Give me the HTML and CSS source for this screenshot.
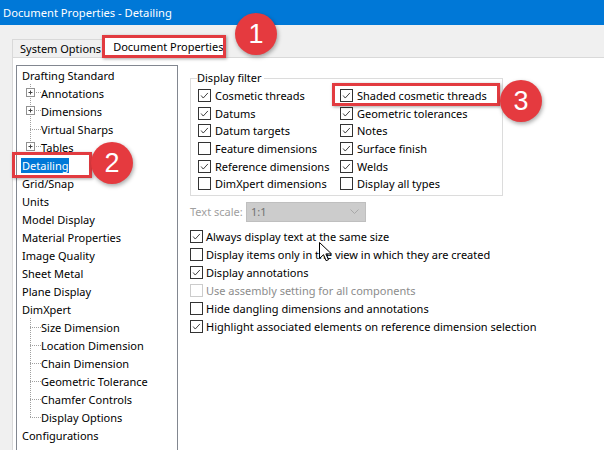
FILE: index.html
```html
<!DOCTYPE html>
<html lang="en">
<head>
    <meta charset="UTF-8">
    <title>Document Properties - Detailing</title>
    <link rel="stylesheet" href="styles.css">
</head>
<body>
    <svg width="0" height="0" class="defs">
        <symbol id="chk" viewBox="0 0 13 13">
            <path d="M2.5 6.5l2.5 3 5.5-6" fill="none" stroke="#333" stroke-width="1.1"/>
        </symbol>
        <symbol id="plus" viewBox="0 0 15 18">
            <rect x="0.5" y="4.5" width="8" height="8" fill="#fff" stroke="#919191"/>
            <path d="M2.5 8.5h4M4.5 6.5v4" stroke="#444"/>
            <path d="M10 8.5h1M12 8.5h1M14 8.5h1" stroke="#a0a0a0"/>
        </symbol>
    </svg>

    <div class="titlebar">Document Properties - Detailing</div>

    <div class="tabs">
        <span class="tab">System Options</span>
        <span class="tab active">Document Properties</span>
    </div>

    <div class="panel">
        <ul class="tree">
            <li class="item">Drafting Standard</li>
            <li class="item child"><svg class="twig"><use href="#plus"/></svg>Annotations</li>
            <li class="item child"><svg class="twig"><use href="#plus"/></svg>Dimensions</li>
            <li class="item child"><span class="twig leaf"></span>Virtual Sharps</li>
            <li class="item child last"><svg class="twig"><use href="#plus"/></svg>Tables</li>
            <li class="item"><span class="sel">Detailing</span></li>
            <li class="item">Grid/Snap</li>
            <li class="item">Units</li>
            <li class="item">Model Display</li>
            <li class="item">Material Properties</li>
            <li class="item">Image Quality</li>
            <li class="item">Sheet Metal</li>
            <li class="item">Plane Display</li>
            <li class="item">DimXpert</li>
            <li class="item child"><span class="twig leaf"></span>Size Dimension</li>
            <li class="item child"><span class="twig leaf"></span>Location Dimension</li>
            <li class="item child"><span class="twig leaf"></span>Chain Dimension</li>
            <li class="item child"><span class="twig leaf"></span>Geometric Tolerance</li>
            <li class="item child"><span class="twig leaf"></span>Chamfer Controls</li>
            <li class="item child last"><span class="twig leaf"></span>Display Options</li>
            <li class="item">Configurations</li>
        </ul>

        <div class="settings">
            <fieldset class="group">
                <legend>Display filter</legend>
                <div class="filter">
                    <div class="check"><svg class="box"><use href="#chk"/></svg>Cosmetic threads</div>
                    <div class="check"><svg class="box"><use href="#chk"/></svg>Shaded cosmetic threads</div>
                    <div class="check"><svg class="box"><use href="#chk"/></svg>Datums</div>
                    <div class="check"><svg class="box"><use href="#chk"/></svg>Geometric tolerances</div>
                    <div class="check"><svg class="box"><use href="#chk"/></svg>Datum targets</div>
                    <div class="check"><svg class="box"><use href="#chk"/></svg>Notes</div>
                    <div class="check"><svg class="box"></svg>Feature dimensions</div>
                    <div class="check"><svg class="box"><use href="#chk"/></svg>Surface finish</div>
                    <div class="check"><svg class="box"><use href="#chk"/></svg>Reference dimensions</div>
                    <div class="check"><svg class="box"><use href="#chk"/></svg>Welds</div>
                    <div class="check"><svg class="box"></svg>DimXpert dimensions</div>
                    <div class="check"><svg class="box"></svg>Display all types</div>
                </div>
            </fieldset>

            <div class="scale">
                <span class="scale-label">Text scale:</span>
                <div class="combo">
                    <span>1:1</span>
                    <svg class="chevron" viewBox="0 0 9 5"><path d="M0.5 0.5l4 4 4-4" fill="none" stroke="#a8a8a8"/></svg>
                </div>
            </div>

            <div class="options">
                <div class="check"><svg class="box"><use href="#chk"/></svg>Always display text at the same size</div>
                <div class="check"><svg class="box"></svg>Display items only in the view in which they are created</div>
                <div class="check"><svg class="box"><use href="#chk"/></svg>Display annotations</div>
                <div class="check off"><svg class="box"></svg>Use assembly setting for all components</div>
                <div class="check"><svg class="box"></svg>Hide dangling dimensions and annotations</div>
                <div class="check"><svg class="box"><use href="#chk"/></svg>Highlight associated elements on reference dimension selection</div>
            </div>
        </div>
    </div>

    <!-- callouts drawn over the dialog -->
    <div class="mark mark-1"></div>
    <div class="mark mark-2"></div>
    <div class="mark mark-3"></div>
    <div class="badge badge-1">1</div>
    <div class="badge badge-2">2</div>
    <div class="badge badge-3">3</div>

    <svg class="cursor" viewBox="0 0 13 20">
        <path d="M0.5 0.5v16l4-3.8 2.6 6 2.4-1-2.6-5.8h5.6z" fill="#fff" stroke="#000"/>
    </svg>
</body>
</html>
```

FILE: styles.css
```css
body {
    margin: 0;
    width: 604px;
    height: 450px;
    overflow: hidden;
    position: relative;
    background-color: #f0f0f0;
    color: #000;
    font-family: "Noto Sans", "Open Sans", sans-serif;
    font-size: 11px;
}
.defs {
    position: absolute;
}

/* title bar */
.titlebar {
    height: 25px;
    line-height: 25px;
    padding-left: 3px;
    background-color: #0078d7;
    color: #fff;
    font-size: 11.2px;
}

/* tabs */
.tabs {
    height: 32px;
    display: flex;
    align-items: flex-end;
    padding-left: 12px;
}
.tab {
    height: 17px;
    line-height: 17px;
    padding: 0 1px 0 7px;
    border: 1px solid #d9d9d9;
    border-bottom: none;
    white-space: nowrap;
}
.tab.active {
    position: relative;
    z-index: 1;
    height: 22px;
    line-height: 21px;
    margin-left: -1px;
    margin-bottom: -1px;
    padding: 0 2px 0 10px;
    background-color: #fff;
}

/* white page under the tabs */
.panel {
    display: flex;
    gap: 12px;
    height: 400px;
    margin-left: 12px;
    padding: 7px 0 0 3px;
    background-color: #fff;
    border-top: 1px solid #d9d9d9;
    border-left: 1px solid #d9d9d9;
}

/* left tree */
.tree {
    flex: none;
    width: 160px;
    height: 400px;
    margin: 0;
    padding: 0;
    list-style: none;
    border: 1px solid #828790;
    border-bottom: none;
}
.item {
    display: flex;
    align-items: center;
    height: 18px;
    padding-left: 5px;
    white-space: nowrap;
}
.child {
    padding-left: 9px;
    background: repeating-linear-gradient(to bottom, #a0a0a0 0 1px, transparent 1px 2px) 13px 0 / 1px 100% no-repeat;
}
.child.last {
    background-size: 1px 9px;
}
.twig {
    flex: none;
    width: 15px;
    height: 18px;
}
.twig.leaf {
    background: repeating-linear-gradient(to right, #a0a0a0 0 1px, transparent 1px 2px) 4px 9px / 11px 1px no-repeat;
}
.sel {
    margin-left: -1px;
    padding: 0 1px;
    line-height: 15px;
    background-color: #0078d7;
    color: #fff;
}

/* right side */
.settings {
    width: 380px;
    padding-top: 5px;
}
.group {
    width: 304px;
    margin: 0;
    padding: 1px 0 2px 7px;
    border: 1px solid #dcdcdc;
}
.group legend {
    margin-left: -1px;
    padding: 0 2px 0 0;
    line-height: 16px;
}
.filter {
    display: grid;
    grid-template-columns: 142px auto;
    grid-auto-rows: 17.6px;
}
.check {
    display: flex;
    align-items: center;
    height: 18px;
    white-space: nowrap;
}
.filter .check {
    height: auto;
}
.box {
    flex: none;
    width: 13px;
    height: 13px;
    margin-right: 4px;
    box-sizing: border-box;
    border: 1px solid #333;
    background-color: #fff;
}
.options .box {
    margin-right: 3px;
}
.check.off {
    color: #8c8c8c;
}
.check.off .box {
    border-color: #cccccc;
}

.scale {
    display: flex;
    align-items: center;
    height: 20px;
    margin-top: 6px;
    color: #a0a0a0;
    white-space: nowrap;
}
.scale-label {
    width: 56px;
}
.combo {
    display: flex;
    align-items: center;
    justify-content: space-between;
    width: 108px;
    height: 18px;
    padding: 0 6px 0 4px;
    border: 1px solid #bfbfbf;
    background-color: #cccccc;
    color: #707070;
}
.chevron {
    width: 9px;
    height: 5px;
}
.options {
    margin-top: 6px;
}

/* red callouts */
.mark {
    position: absolute;
    z-index: 2;
    box-sizing: border-box;
    border: 3px solid #e23b40;
    box-shadow: 1px 1px 3px rgba(0, 0, 0, 0.35);
}
.mark-1 { left: 102px; top: 35px; width: 124px; height: 23px; }
.mark-2 { left: 12px; top: 152px; width: 80px; height: 26px; }
.mark-3 { left: 332px; top: 83px; width: 168px; height: 23px; }

.badge {
    position: absolute;
    z-index: 3;
    width: 42px;
    height: 42px;
    border-radius: 50%;
    display: flex;
    align-items: center;
    justify-content: center;
    background-color: #e53a3f;
    color: #fff;
    font-family: "Liberation Sans", sans-serif;
    font-size: 27px;
    box-shadow: 1px 2px 4px rgba(0, 0, 0, 0.35);
}
.badge-1 { left: 235px; top: 13px; }
.badge-2 { left: 91px; top: 142px; }
.badge-3 { left: 500px; top: 80px; }

.cursor {
    position: absolute;
    z-index: 3;
    left: 319px;
    top: 242px;
    width: 13px;
    height: 20px;
}
```
